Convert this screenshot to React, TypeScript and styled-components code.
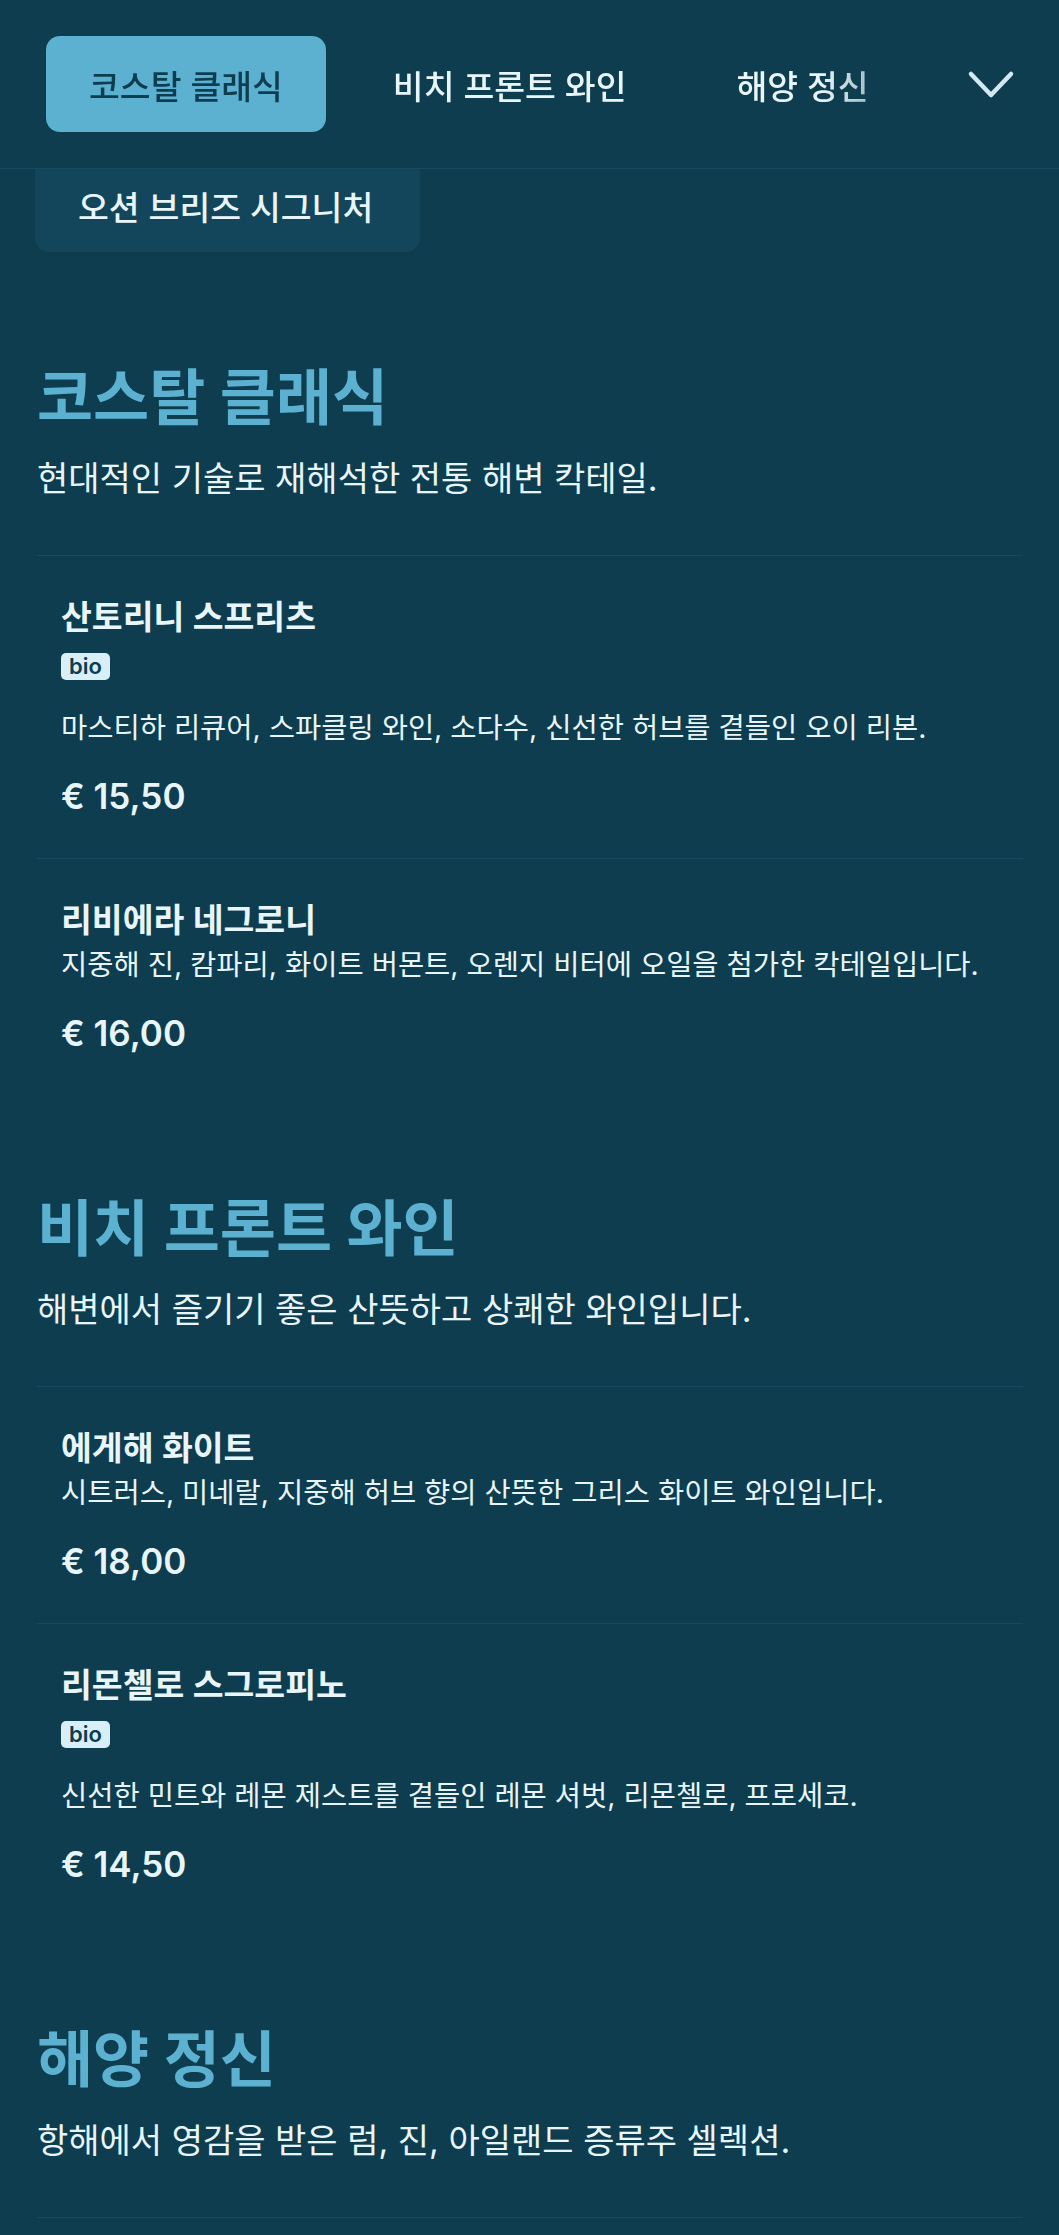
import React from "react";
import styled, { createGlobalStyle } from "styled-components";

// 페이지 색상: 짙은 바다색 배경 + 하늘색 포인트
const color = {
  bg: "#0d3d4f",
  raised: "#13465a",
  line: "#174a5c",
  accent: "#5cb1d1",
  ink: "#e8f5fa",
  inkSoft: "#d2e9f3",
  badge: "#d9eff8",
};

const GlobalStyle = createGlobalStyle`
  html, body {
    margin: 0;
    padding: 0;
    background: ${color.bg};
  }
  body {
    font-family: "Inter", "Noto Sans CJK KR", sans-serif;
    color: ${color.ink};
    -webkit-font-smoothing: antialiased;
  }
  * { box-sizing: border-box; }
`;

interface MenuItem {
  name: string;
  bio?: boolean;
  description: string;
  price: string;
}

interface MenuSection {
  id: string;
  title: string;
  description: string;
  items: MenuItem[];
}

const SECTIONS: MenuSection[] = [
  {
    id: "coastal",
    title: "코스탈 클래식",
    description: "현대적인 기술로 재해석한 전통 해변 칵테일.",
    items: [
      {
        name: "산토리니 스프리츠",
        bio: true,
        description: "마스티하 리큐어, 스파클링 와인, 소다수, 신선한 허브를 곁들인 오이 리본.",
        price: "€ 15,50",
      },
      {
        name: "리비에라 네그로니",
        description: "지중해 진, 캄파리, 화이트 버몬트, 오렌지 비터에 오일을 첨가한 칵테일입니다.",
        price: "€ 16,00",
      },
    ],
  },
  {
    id: "beachfront",
    title: "비치 프론트 와인",
    description: "해변에서 즐기기 좋은 산뜻하고 상쾌한 와인입니다.",
    items: [
      {
        name: "에게해 화이트",
        description: "시트러스, 미네랄, 지중해 허브 향의 산뜻한 그리스 화이트 와인입니다.",
        price: "€ 18,00",
      },
      {
        name: "리몬첼로 스그로피노",
        bio: true,
        description: "신선한 민트와 레몬 제스트를 곁들인 레몬 셔벗, 리몬첼로, 프로세코.",
        price: "€ 14,50",
      },
    ],
  },
  {
    id: "maritime",
    title: "해양 정신",
    description: "항해에서 영감을 받은 럼, 진, 아일랜드 증류주 셀렉션.",
    items: [
      {
        name: "선원의 다크 럼",
        description: "캐러멜과 바닐라 향이 감도는 숙성 럼, 한 잔.",
        price: "€ 12,00",
      },
    ],
  },
];

const TABS = SECTIONS.map((s) => s.title);

const Page = styled.div`
  min-height: 100vh;
  background: ${color.bg};
`;

const Nav = styled.nav`
  position: relative;
  z-index: 2;
  display: flex;
  align-items: center;
  height: 169px;
  padding: 0 26px 0 46px;
  background: ${color.bg};
  border-bottom: 1px solid ${color.line};
`;

const TabList = styled.div`
  flex: 1;
  display: flex;
  align-items: center;
  gap: 24px;
  overflow: hidden;
  white-space: nowrap;
  /* 오른쪽 끝에서 탭이 흐려지며 잘림 */
  mask-image: linear-gradient(to right, #000 calc(100% - 120px), rgba(0, 0, 0, 0.25));
`;

const Tab = styled.button<{ $active?: boolean }>`
  flex: none;
  height: 96px;
  padding: 0 43px;
  border: none;
  border-radius: 14px;
  background: ${({ $active }) => ($active ? color.accent : "transparent")};
  color: ${({ $active }) => ($active ? color.bg : color.ink)};
  font-family: inherit;
  font-size: 33.5px;
  font-weight: 500;
  cursor: pointer;
`;

const MoreButton = styled.button`
  flex: none;
  display: flex;
  align-items: center;
  justify-content: center;
  width: 84px;
  height: 96px;
  margin-left: 8px;
  border: none;
  background: transparent;
  color: ${color.inkSoft};
  cursor: pointer;
`;

const OverflowRow = styled.div`
  display: flex;
  margin-top: -11px;
  padding-left: 35px;
`;

const OverflowTab = styled.button`
  height: 94px;
  padding: 0 47px 0 43px;
  border: none;
  border-radius: 14px;
  background: ${color.raised};
  color: ${color.ink};
  font-family: inherit;
  font-size: 33.5px;
  font-weight: 500;
`;

const Main = styled.main`
  padding: 12px 36px 0 37px;
`;

const Section = styled.section`
  padding-top: 100px;
`;

const SectionTitle = styled.h2`
  margin: 0 0 25px;
  color: ${color.accent};
  font-size: 61px;
  line-height: 68px;
  font-weight: 700;
`;

const SectionDescription = styled.p`
  margin: 0 0 54px;
  color: ${color.ink};
  font-size: 34px;
  line-height: 44px;
  font-weight: 400;
`;

const ItemList = styled.div`
  display: flex;
  flex-direction: column;
`;

const Item = styled.article`
  display: flex;
  flex-direction: column;
  align-items: flex-start;
  padding: 42px 24px;
  border-top: 1px solid ${color.line};
`;

const ItemName = styled.h3`
  margin: 0;
  font-size: 33.5px;
  line-height: 38px;
  font-weight: 600;
  color: ${color.ink};
`;

const Tags = styled.div`
  display: flex;
  gap: 8px;
  margin: 17px 0 22px;
`;

const Badge = styled.span`
  padding: 0 8px;
  border-radius: 5px;
  background: ${color.badge};
  color: ${color.bg};
  font-size: 22px;
  line-height: 27px;
  font-weight: 600;
`;

const ItemDescription = styled.p`
  margin: 7px 0 0;
  font-size: 28.5px;
  line-height: 38px;
  color: ${color.ink};
`;

const Price = styled.div`
  margin-top: 29px;
  font-size: 35px;
  line-height: 40px;
  font-weight: 600;
  color: ${color.ink};
`;

const Chevron = () => (
  <svg width="48" height="30" viewBox="0 0 48 30" fill="none">
    <polyline
      points="4,5 24,26 44,5"
      stroke="currentColor"
      strokeWidth="4.5"
      strokeLinecap="round"
      strokeLinejoin="round"
    />
  </svg>
);

export default function App() {
  const active = TABS[0];

  return (
    <Page>
      <GlobalStyle />
      <Nav>
        <TabList>
          {TABS.map((tab) => (
            <Tab key={tab} $active={tab === active}>
              {tab}
            </Tab>
          ))}
        </TabList>
        <MoreButton aria-label="더 보기">
          <Chevron />
        </MoreButton>
      </Nav>
      <OverflowRow>
        <OverflowTab>오션 브리즈 시그니처</OverflowTab>
      </OverflowRow>
      <Main>
        {SECTIONS.map((section) => (
          <Section key={section.id}>
            <SectionTitle>{section.title}</SectionTitle>
            <SectionDescription>{section.description}</SectionDescription>
            <ItemList>
              {section.items.map((item) => (
                <Item key={item.name}>
                  <ItemName>{item.name}</ItemName>
                  {item.bio && (
                    <Tags>
                      <Badge>bio</Badge>
                    </Tags>
                  )}
                  <ItemDescription>{item.description}</ItemDescription>
                  <Price>{item.price}</Price>
                </Item>
              ))}
            </ItemList>
          </Section>
        ))}
      </Main>
    </Page>
  );
}
